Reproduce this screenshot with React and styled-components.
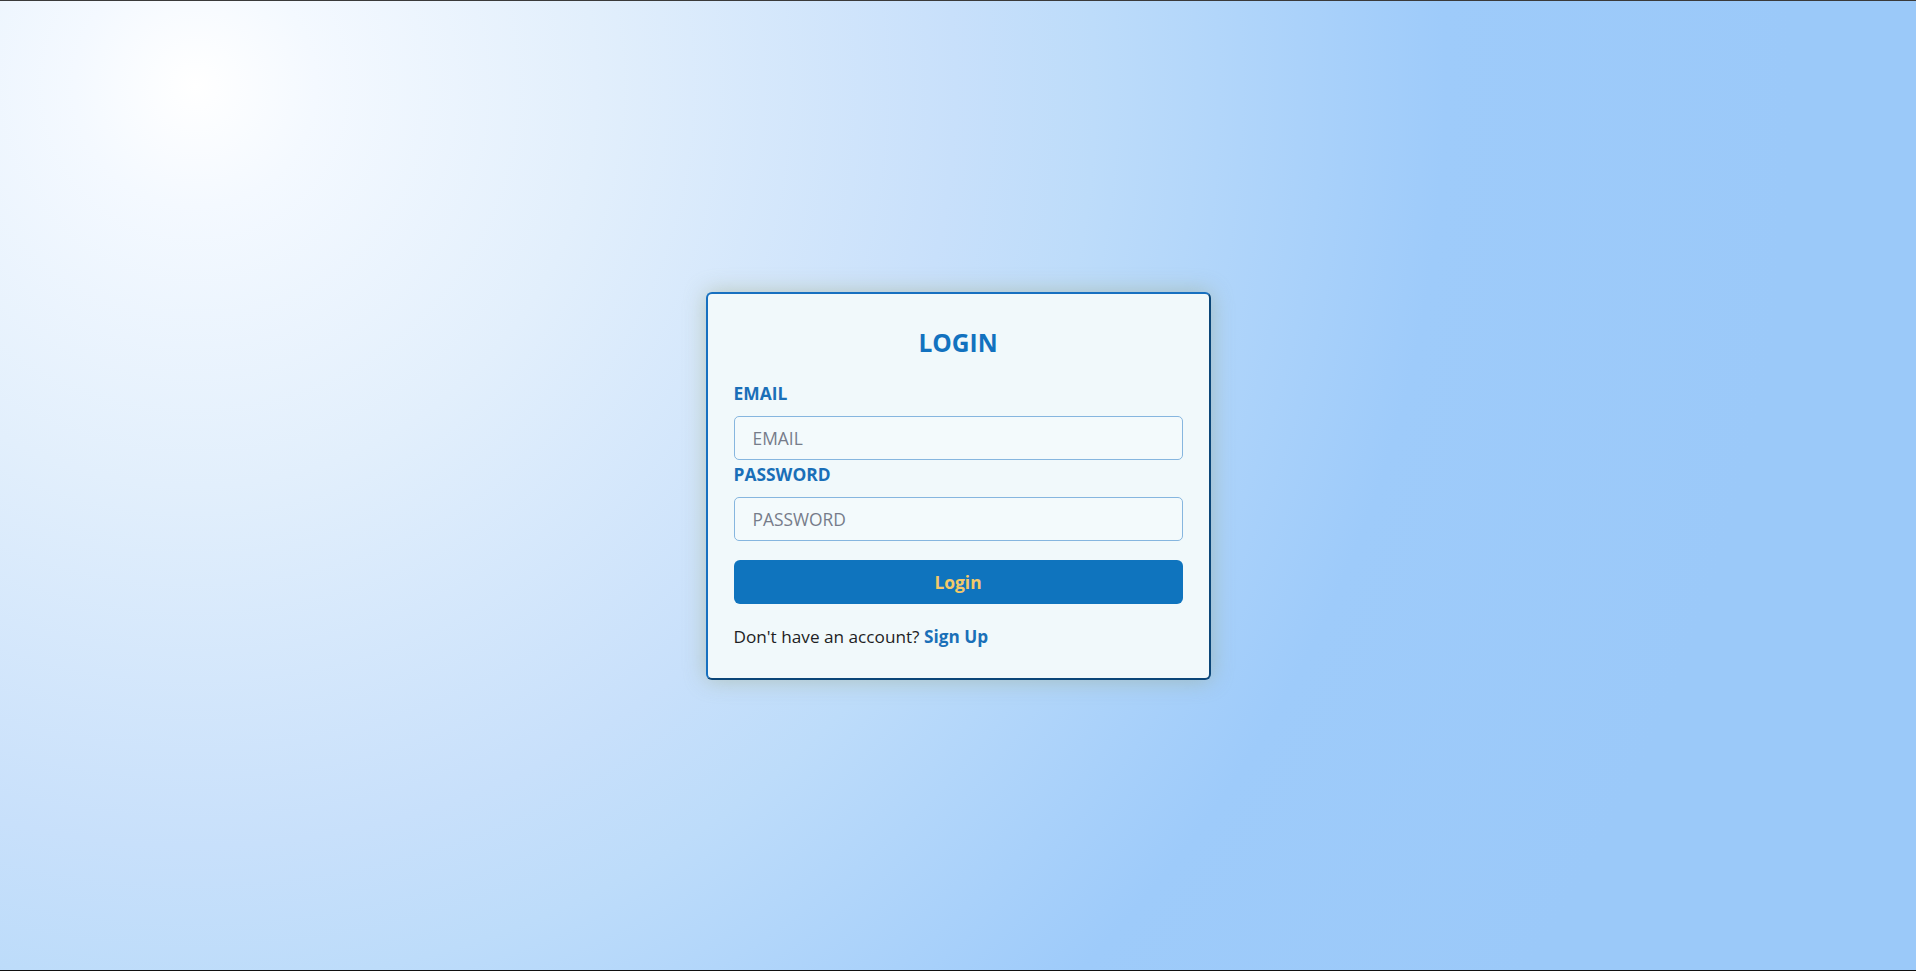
import React from 'react';
import styled, { createGlobalStyle } from 'styled-components';

const GlobalStyle = createGlobalStyle`
  * {
    box-sizing: border-box;
  }

  body {
    margin: 0;
    font-family: "Open Sans", "Noto Sans", sans-serif;
  }
`;

const Page = styled.div`
  min-height: 100vh;
  display: flex;
  align-items: center;
  justify-content: center;
  border-top: 1px solid #3a3a3a;
  border-bottom: 1px solid #111;
  background: radial-gradient(
    circle at 195px 85px,
    #ffffff 0px,
    #f4f9ff 120px,
    #e2effc 400px,
    #c8e0fb 760px,
    #bddcfa 900px,
    #9ecbfa 1250px,
    #9bc9f9 1600px
  );
`;

const Card = styled.form`
  width: 505px;
  padding: 34px 26px 29px;
  background: #f1f9fb;
  border: 2px solid;
  border-color: #1770c0 #0b4678 #0b4678 #1770c0;
  border-radius: 6px;
  box-shadow: 0 0 22px rgba(150, 160, 110, 0.45);
  display: flex;
  flex-direction: column;
`;

const Title = styled.h2`
  margin: 0 0 23px;
  font-size: 24.5px;
  line-height: 30px;
  font-weight: 700;
  text-align: center;
  color: #1272bf;
`;

const Label = styled.label`
  display: block;
  font-size: 17.4px;
  line-height: 24px;
  font-weight: 700;
  color: #1a6fb8;
  margin-bottom: ${(p) => p.$gap}px;
`;

const Input = styled.input`
  width: 100%;
  height: 44px;
  padding: 0 18px;
  border: 1px solid #86b6df;
  border-radius: 5px;
  background: #f3fafc;
  font-family: inherit;
  font-size: 17.4px;
  color: #333;
  outline: none;
  margin-bottom: ${(p) => p.$gap}px;

  &::placeholder {
    color: #767c8a;
  }
`;

const Button = styled.button`
  width: 100%;
  height: 44px;
  border: none;
  border-radius: 6px;
  background: #0f74be;
  color: #f3c969;
  font-family: inherit;
  font-size: 17.4px;
  font-weight: 700;
  cursor: pointer;
  margin: 8px 0 21px;
`;

const Footer = styled.p`
  margin: 0;
  font-size: 17.2px;
  line-height: 24px;
  color: #1e1e24;

  a {
    color: #1a70b8;
    font-weight: 700;
    text-decoration: none;
  }
`;

export default function App() {
  return (
    <>
      <GlobalStyle />
      <Page>
        <Card onSubmit={(e) => e.preventDefault()}>
          <Title>LOGIN</Title>
          <Label htmlFor="email" $gap={11}>EMAIL</Label>
          <Input id="email" type="email" placeholder="EMAIL" $gap={2} />
          <Label htmlFor="password" $gap={11}>PASSWORD</Label>
          <Input id="password" type="password" placeholder="PASSWORD" $gap={11} />
          <Button type="submit">Login</Button>
          <Footer>
            Don't have an account? <a href="#signup">Sign Up</a>
          </Footer>
        </Card>
      </Page>
    </>
  );
}
